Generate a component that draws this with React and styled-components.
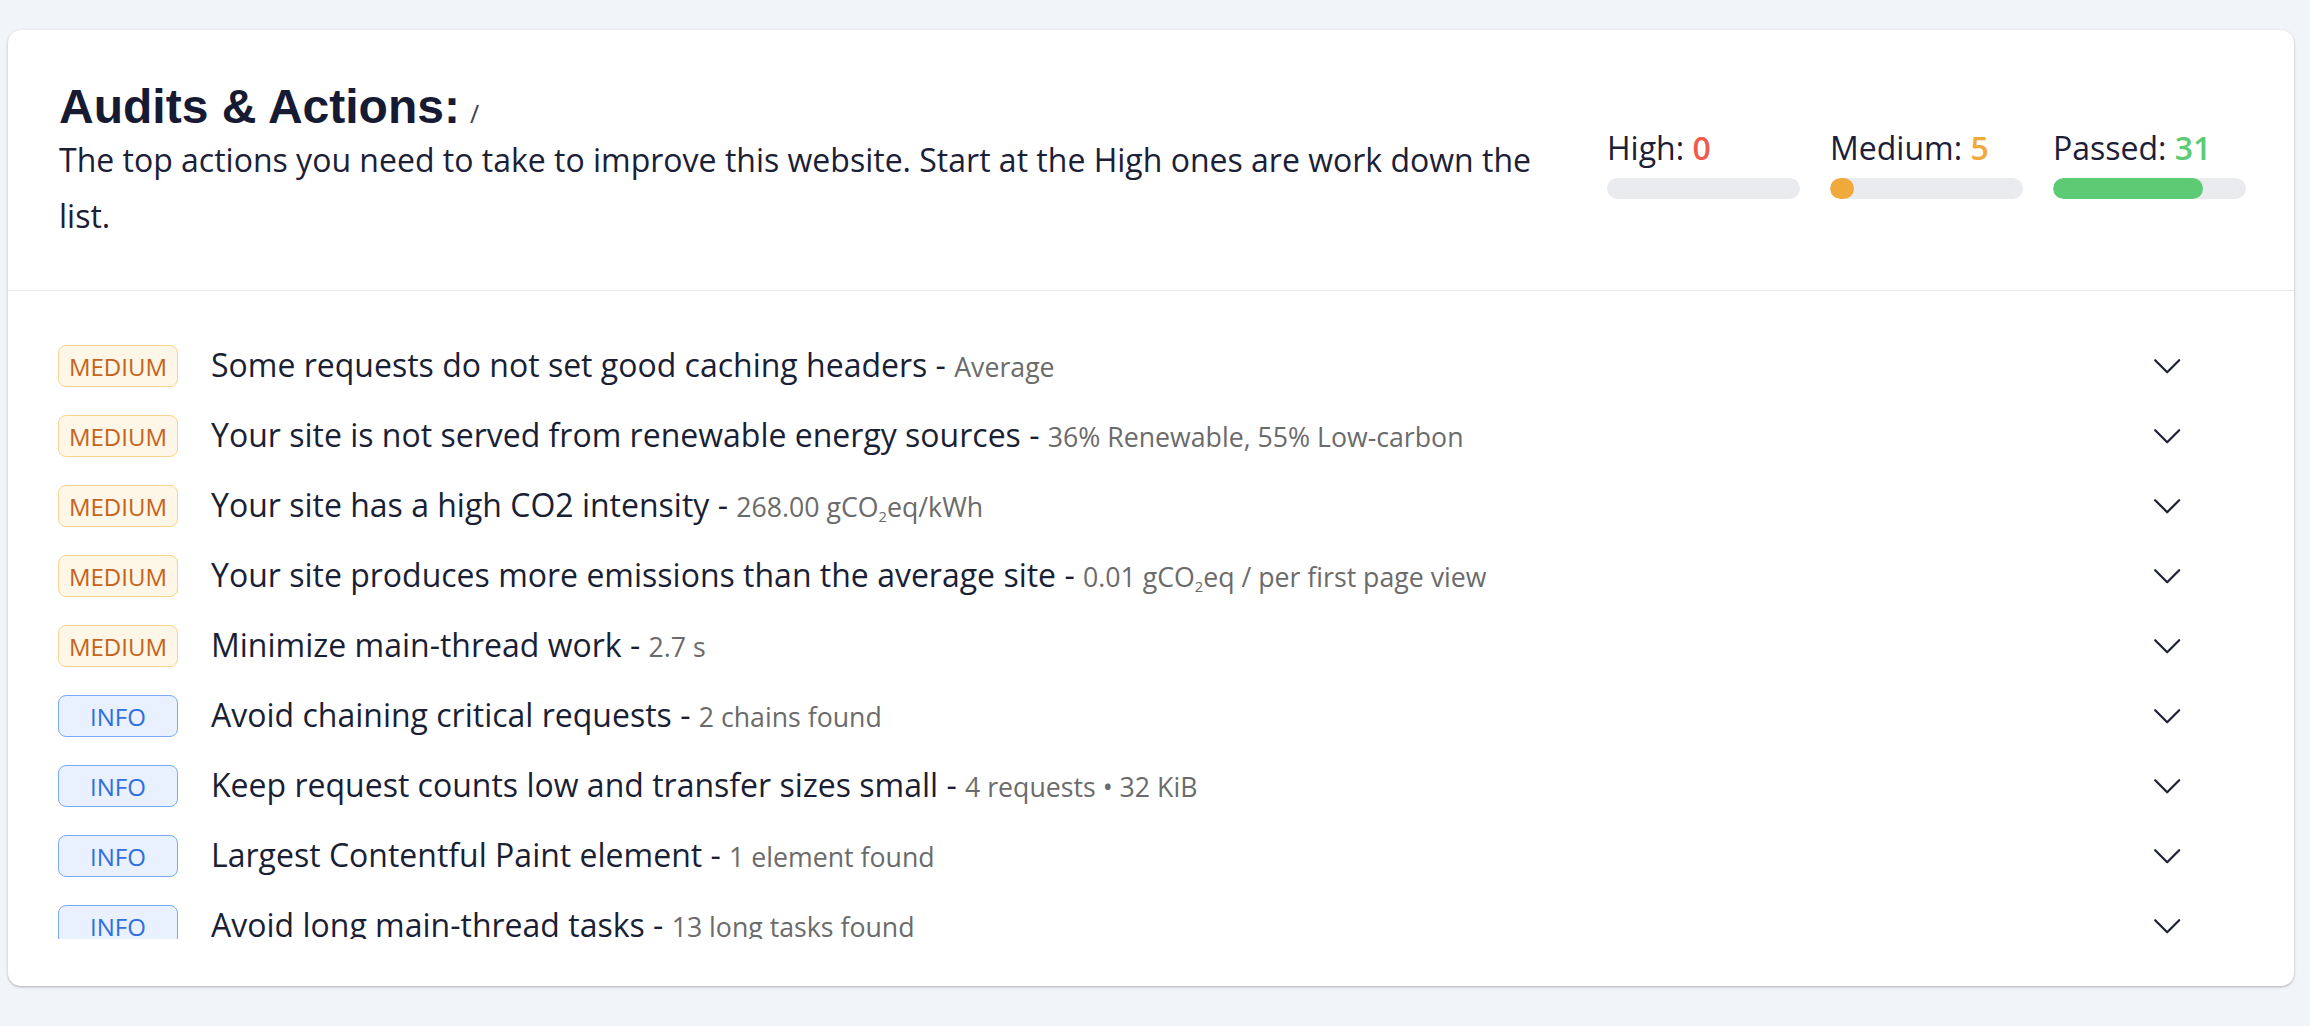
import React from "react";
import styled, { createGlobalStyle, css } from "styled-components";

const GlobalStyle = createGlobalStyle`
  html, body {
    margin: 0;
    padding: 0;
    background: #f1f4f9;
  }
  body {
    font-family: "Open Sans", "Noto Sans", sans-serif;
    color: #1b2036;
  }
`;

const Page = styled.div`
  padding: 30px 16px 38px 8px;
  box-sizing: border-box;
`;

const Card = styled.section`
  background: #ffffff;
  border-radius: 13px;
  box-shadow: 0 1px 3px rgba(0, 0, 0, 0.22), 0 1px 2px rgba(0, 0, 0, 0.08);
  padding-bottom: 47px;
`;

const Header = styled.header`
  display: flex;
  align-items: center;
  gap: 64px;
  padding: 57px 48px 46px 51px;
  border-bottom: 1px solid #e8e9ed;
`;

const HeaderText = styled.div`
  flex: 1;
  min-width: 0;
`;

const Title = styled.h2`
  margin: 0;
  font-family: "Liberation Sans", Arial, sans-serif;
  font-weight: 700;
  font-size: 48px;
  line-height: 40px;
  color: #161b33;
`;

const TitleSlash = styled.span`
  font-family: "Open Sans", sans-serif;
  font-weight: 400;
  font-size: 25px;
  line-height: 1;
  color: #3b4154;
  margin-left: 10px;
`;

const Description = styled.p`
  margin: 5px 0 0;
  font-size: 32px;
  line-height: 56px;
  color: #1b2036;
`;

const Stats = styled.div`
  display: flex;
  gap: 30px;
  flex-shrink: 0;
  margin-bottom: 8px;
`;

const Stat = styled.div`
  width: 193px;
`;

const StatLabel = styled.div`
  font-size: 32px;
  line-height: 48px;
  color: #1b2036;
  white-space: nowrap;
`;

const StatValue = styled.span`
  font-weight: 600;
  color: ${(p) => p.$color};
`;

const Track = styled.div`
  margin-top: 6px;
  height: 21px;
  border-radius: 11px;
  background: #eaebef;
  overflow: hidden;
`;

const Fill = styled.div`
  height: 100%;
  border-radius: 11px;
  background: ${(p) => p.$color};
`;

const List = styled.div`
  padding-top: 40px;
`;

const Viewport = styled.div`
  height: 608px;
  overflow: hidden;
`;

const Row = styled.div`
  display: flex;
  align-items: center;
  height: 70px;
  padding: 0 108px 0 50px;
`;

const badgeTones = {
  medium: css`
    background: #fef6e7;
    border-color: #f8d48f;
    color: #c4631c;
  `,
  info: css`
    background: #e9f1fe;
    border-color: #7ca9f6;
    color: #2f6fe0;
  `,
};

const Badge = styled.span`
  box-sizing: border-box;
  width: 120px;
  height: 42px;
  flex-shrink: 0;
  display: flex;
  align-items: center;
  justify-content: center;
  border: 1.6px solid;
  border-radius: 8px;
  font-size: 24px;
  ${(p) => badgeTones[p.$tone]}
`;

const RowTitle = styled.div`
  flex: 1;
  margin-left: 33px;
  font-size: 32px;
  line-height: 44px;
  color: #1a1f35;
  white-space: nowrap;
`;

const Detail = styled.span`
  font-size: 26.7px;
  color: #6b6b6b;
  sub {
    font-size: 0.55em;
    vertical-align: -0.35em;
    line-height: 0;
  }
`;

const Chevron = styled.svg`
  width: 38.4px;
  height: 38.4px;
  flex-shrink: 0;
  color: #1e2235;
`;

const ChevronDown = () => (
  <Chevron viewBox="0 0 24 24" fill="none" stroke="currentColor" strokeWidth="1.4">
    <path strokeLinecap="round" strokeLinejoin="round" d="m19.5 8.25-7.5 7.5-7.5-7.5" />
  </Chevron>
);

const CO2 = () => (
  <>
    gCO<sub>2</sub>eq
  </>
);

const audits = [
  { tone: "medium", label: "MEDIUM", title: "Some requests do not set good caching headers", detail: "Average" },
  { tone: "medium", label: "MEDIUM", title: "Your site is not served from renewable energy sources", detail: "36% Renewable, 55% Low-carbon" },
  { tone: "medium", label: "MEDIUM", title: "Your site has a high CO2 intensity", detail: <>268.00 <CO2 />/kWh</> },
  { tone: "medium", label: "MEDIUM", title: "Your site produces more emissions than the average site", detail: <>0.01 <CO2 /> / per first page view</> },
  { tone: "medium", label: "MEDIUM", title: "Minimize main-thread work", detail: "2.7 s" },
  { tone: "info", label: "INFO", title: "Avoid chaining critical requests", detail: "2 chains found" },
  { tone: "info", label: "INFO", title: "Keep request counts low and transfer sizes small", detail: "4 requests • 32 KiB" },
  { tone: "info", label: "INFO", title: "Largest Contentful Paint element", detail: "1 element found" },
  { tone: "info", label: "INFO", title: "Avoid long main-thread tasks", detail: "13 long tasks found" },
];

const stats = [
  { label: "High:", value: 0, color: "#ef5b4b", pct: 0 },
  { label: "Medium:", value: 5, color: "#f2a93b", pct: 12.5 },
  { label: "Passed:", value: 31, color: "#5ccb74", pct: 77.5 },
];

export default function App() {
  return (
    <>
      <GlobalStyle />
      <Page>
        <Card>
          <Header>
            <HeaderText>
              <Title>
                Audits &amp; Actions:<TitleSlash>/</TitleSlash>
              </Title>
              <Description>
                The top actions you need to take to improve this website. Start at the High ones are work down the list.
              </Description>
            </HeaderText>
            <Stats>
              {stats.map((s) => (
                <Stat key={s.label}>
                  <StatLabel>
                    {s.label} <StatValue $color={s.color}>{s.value}</StatValue>
                  </StatLabel>
                  <Track>
                    <Fill $color={s.color} style={{ width: `${s.pct}%` }} />
                  </Track>
                </Stat>
              ))}
            </Stats>
          </Header>
          <List>
            <Viewport>
              {audits.map((a, i) => (
                <Row key={i}>
                  <Badge $tone={a.tone}>{a.label}</Badge>
                  <RowTitle>
                    {a.title} - <Detail>{a.detail}</Detail>
                  </RowTitle>
                  <ChevronDown />
                </Row>
              ))}
            </Viewport>
          </List>
        </Card>
      </Page>
    </>
  );
}
